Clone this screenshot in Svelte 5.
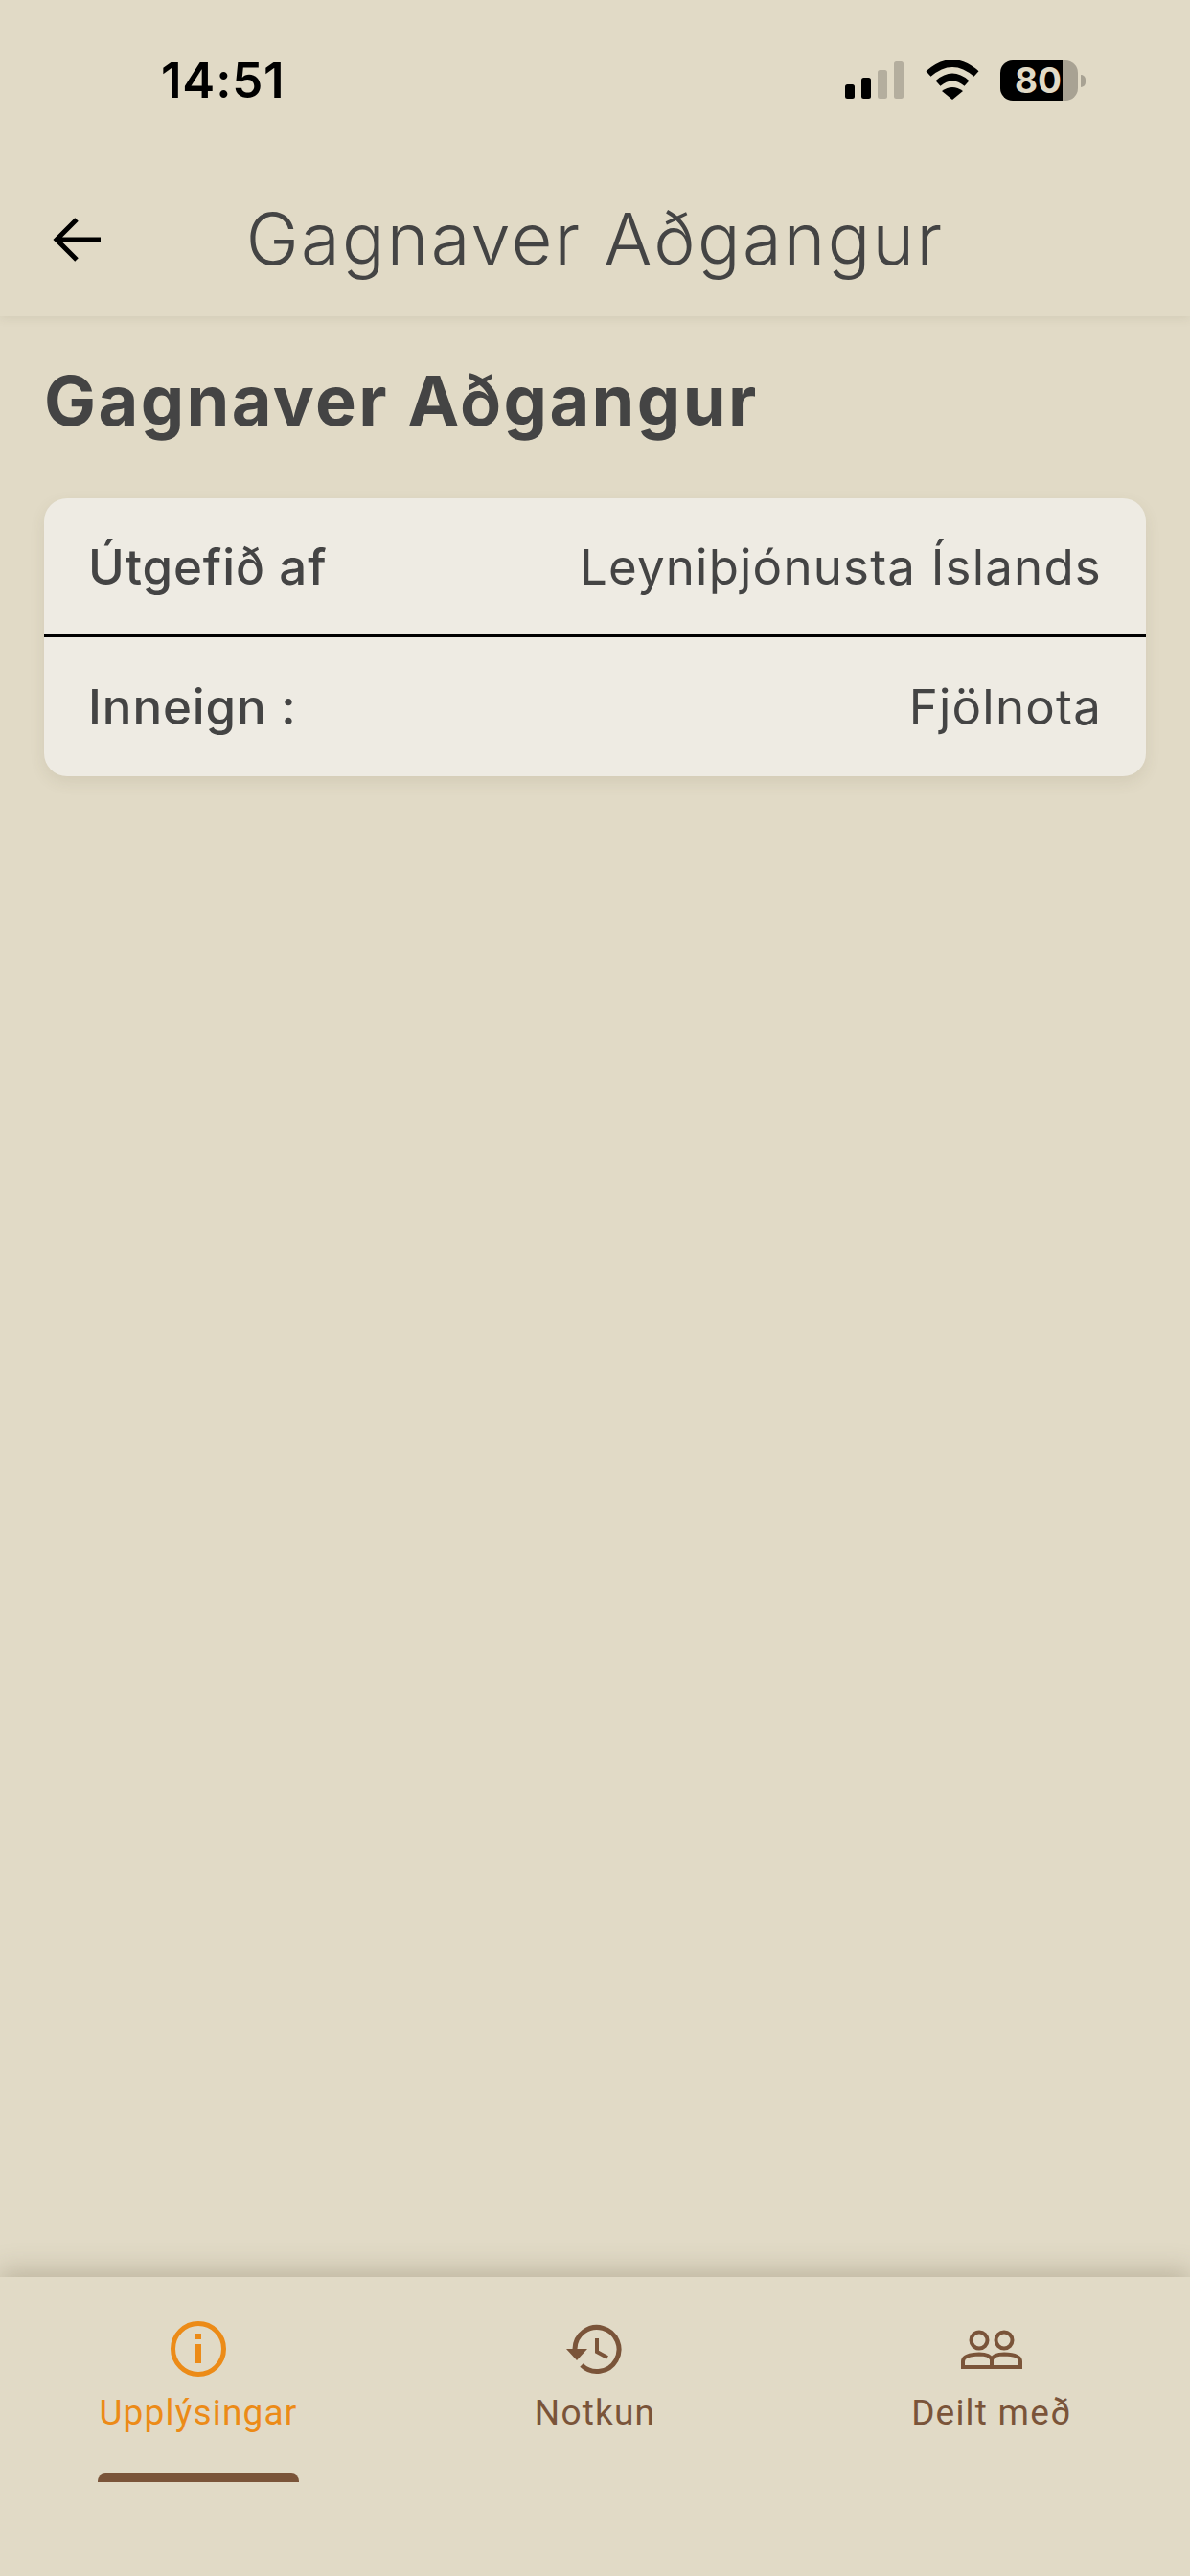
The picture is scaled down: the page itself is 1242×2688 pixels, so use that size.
<script>
	const rows = [
		{ label: 'Útgefið af', value: 'Leyniþjónusta Íslands' },
		{ label: 'Inneign :', value: 'Fjölnota' }
	];
</script>

<div class="screen">
	<header class="top">
		<div class="status">
			<span class="time">14:51</span>
			<div class="status-icons">
				<svg class="signal" width="62" height="40" viewBox="0 0 62 40">
					<rect x="0" y="24" width="10" height="15" rx="2.5" fill="#000" />
					<rect x="17" y="17" width="10" height="22" rx="2.5" fill="#000" />
					<rect x="34" y="9" width="10" height="30" rx="2.5" fill="#b4ae9e" />
					<rect x="51" y="0" width="10" height="39" rx="2.5" fill="#b4ae9e" />
				</svg>
				<svg class="wifi" width="56" height="42" viewBox="0 0 56 42">
					<path d="M3 14 Q28 -8 53 14" fill="none" stroke="#000" stroke-width="7.5" />
					<path d="M13 24 Q28 11 43 24" fill="none" stroke="#000" stroke-width="7.5" />
					<path d="M17 32 Q28 24 39 32 L28 41 Z" fill="#000" />
				</svg>
				<div class="battery">
					<div class="battery-body">
						<span class="battery-level">80</span>
					</div>
					<span class="battery-tip"></span>
				</div>
			</div>
		</div>
		<div class="appbar">
			<svg class="back" width="52" height="48" viewBox="0 0 52 48">
				<path d="M50 24 H5 M25 3 L4 24 L25 45" fill="none" stroke="#000" stroke-width="5" />
			</svg>
			<h1 class="appbar-title">Gagnaver Aðgangur</h1>
		</div>
	</header>

	<main class="content">
		<h2 class="heading">Gagnaver Aðgangur</h2>
		<section class="card">
			{#each rows as row}
				<div class="row">
					<span class="row-label">{row.label}</span>
					<span class="row-value">{row.value}</span>
				</div>
			{/each}
		</section>
	</main>

	<nav class="tabs">
		<div class="tab active">
			<svg width="60" height="60" viewBox="0 0 60 60">
				<circle cx="30" cy="30" r="26.5" fill="none" stroke="#ec8b17" stroke-width="5" />
				<rect x="27" y="14" width="6" height="6" fill="#ec8b17" />
				<rect x="27" y="25" width="6" height="20" fill="#ec8b17" />
			</svg>
			<span class="tab-label">Upplýsingar</span>
			<span class="indicator"></span>
		</div>
		<div class="tab">
			<svg width="60" height="60" viewBox="0 0 60 60">
				<path d="M9 30 A23 23 0 1 1 16 47" fill="none" stroke="#7a5439" stroke-width="5" />
				<path d="M0 30 H22 L11 42 Z" fill="#7a5439" />
				<path d="M32 19 V33 L43 39" fill="none" stroke="#7a5439" stroke-width="4" />
			</svg>
			<span class="tab-label">Notkun</span>
		</div>
		<div class="tab">
			<svg width="66" height="60" viewBox="0 0 66 60">
				<circle cx="20" cy="21" r="8.5" fill="none" stroke="#7a5439" stroke-width="4" />
				<circle cx="46" cy="21" r="8.5" fill="none" stroke="#7a5439" stroke-width="4" />
				<path d="M3 49 V43 Q3 36 20 35.5 Q31 35.5 33 41 Q35 35.5 46 35.5 Q63 36 63 43 V49 Z M33 41 V49" fill="none" stroke="#7a5439" stroke-width="4" />
			</svg>
			<span class="tab-label">Deilt með</span>
		</div>
	</nav>
</div>

<style>
	:global(body) {
		margin: 0;
		background: #e1dac6;
	}

	.screen {
		width: 1242px;
		height: 2688px;
		display: flex;
		flex-direction: column;
		background: #e1dac6;
		color: #444;
		font-family: Inter, 'Open Sans', sans-serif;
	}

	.top {
		height: 330px;
		box-shadow: 0 2px 10px rgba(90, 80, 50, 0.1);
		display: flex;
		flex-direction: column;
	}

	.status {
		height: 170px;
		padding: 46px 109px 0 168px;
		box-sizing: border-box;
		display: flex;
		justify-content: space-between;
		align-items: flex-start;
	}

	.time {
		font-size: 51px;
		font-weight: 600;
		line-height: 76px;
		letter-spacing: 0.8px;
		color: #000;
	}

	.status-icons {
		display: flex;
		align-items: center;
		gap: 22px;
		height: 72px;
		margin-top: 2px;
	}

	.battery {
		display: flex;
		align-items: center;
		gap: 3px;
	}

	.battery-body {
		width: 81px;
		height: 42px;
		border-radius: 13px;
		background: linear-gradient(to right, #000 0 65px, #a8a293 65px);
		display: flex;
		padding-left: 15px;
		box-sizing: border-box;
		align-items: center;
	}

	.battery-level {
		font-size: 37px;
		font-weight: 700;
		color: #e1dac6;
		line-height: 42px;
	}

	.battery-tip {
		width: 5px;
		height: 13px;
		border-radius: 0 6px 6px 0;
		background: #a8a293;
	}

	.appbar {
		position: relative;
		flex: 1;
		display: flex;
		align-items: center;
		justify-content: center;
		padding-bottom: 2px;
	}

	.back {
		position: absolute;
		left: 55px;
		top: 56px;
	}

	.appbar-title {
		margin: 0;
		font-size: 74px;
		font-weight: 300;
		letter-spacing: 2.3px;
		color: #444;
	}

	.content {
		flex: 1;
		padding: 46px 46px 0;
	}

	.heading {
		margin: 0;
		font-size: 72px;
		font-weight: 700;
		line-height: 84px;
		letter-spacing: 2.4px;
		color: #444;
	}

	.card {
		margin-top: 60px;
		background: #eeebe3;
		border-radius: 24px;
		box-shadow: 0 6px 16px rgba(90, 80, 50, 0.1);
	}

	.row {
		height: 145px;
		box-sizing: border-box;
		padding: 0 46px;
		display: flex;
		justify-content: space-between;
		align-items: center;
		font-size: 51px;
	}

	.row:first-child {
		border-bottom: 3px solid #000;
	}

	.row-label {
		font-weight: 500;
		letter-spacing: 0.9px;
	}

	.row-value {
		font-weight: 400;
		letter-spacing: 1.2px;
	}

	.tabs {
		height: 312px;
		display: grid;
		grid-template-columns: repeat(3, 1fr);
		box-shadow: 0 -8px 24px rgba(90, 80, 50, 0.25);
		background: #e1dac6;
		box-sizing: border-box;
	}

	.tab {
		display: flex;
		flex-direction: column;
		align-items: center;
		padding-top: 45px;
		color: #7a5439;
	}

	.tab-label {
		font-family: Roboto, sans-serif;
		font-size: 37px;
		line-height: 44px;
		margin-top: 15px;
		letter-spacing: 1.2px;
	}

	.active {
		color: #ec8b17;
	}

	.indicator {
		width: 210px;
		height: 9px;
		margin-top: 41px;
		border-radius: 8px 8px 0 0;
		background: #7a5439;
	}
</style>
